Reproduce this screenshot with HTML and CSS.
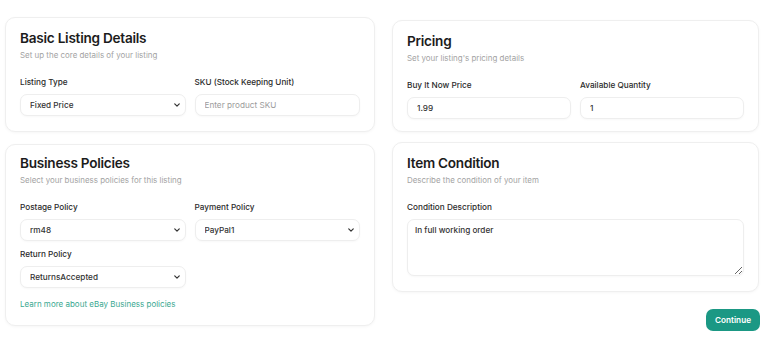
FILE: index.html
```html
<!DOCTYPE html>
<html lang="en">
<head>
<meta charset="utf-8">
<title>Listing</title>
<link rel="stylesheet" href="styles.css">
</head>
<body>
<div class="page">
  <div class="col">
    <section class="card">
      <h2 class="card-title">Basic Listing Details</h2>
      <p class="card-sub">Set up the core details of your listing</p>
      <div class="fields">
        <div class="field">
          <label class="label">Listing Type</label>
          <div class="select-wrap">
            <select class="control"><option>Fixed Price</option></select>
            <svg class="chev" viewBox="0 0 8 5" width="6" height="4"><polyline points="1,1 4,4 7,1" fill="none" stroke="#333" stroke-width="1.6" stroke-linecap="round" stroke-linejoin="round"/></svg>
          </div>
        </div>
        <div class="field">
          <label class="label">SKU (Stock Keeping Unit)</label>
          <input class="control" type="text" placeholder="Enter product SKU">
        </div>
      </div>
    </section>

    <section class="card card-policies">
      <h2 class="card-title">Business Policies</h2>
      <p class="card-sub">Select your business policies for this listing</p>
      <div class="fields">
        <div class="field">
          <label class="label">Postage Policy</label>
          <div class="select-wrap">
            <select class="control"><option>rm48</option></select>
            <svg class="chev" viewBox="0 0 8 5" width="6" height="4"><polyline points="1,1 4,4 7,1" fill="none" stroke="#333" stroke-width="1.6" stroke-linecap="round" stroke-linejoin="round"/></svg>
          </div>
        </div>
        <div class="field">
          <label class="label">Payment Policy</label>
          <div class="select-wrap">
            <select class="control"><option>PayPal1</option></select>
            <svg class="chev" viewBox="0 0 8 5" width="6" height="4"><polyline points="1,1 4,4 7,1" fill="none" stroke="#333" stroke-width="1.6" stroke-linecap="round" stroke-linejoin="round"/></svg>
          </div>
        </div>
      </div>
      <div class="fields fields-next">
        <div class="field">
          <label class="label">Return Policy</label>
          <div class="select-wrap">
            <select class="control"><option>ReturnsAccepted</option></select>
            <svg class="chev" viewBox="0 0 8 5" width="6" height="4"><polyline points="1,1 4,4 7,1" fill="none" stroke="#333" stroke-width="1.6" stroke-linecap="round" stroke-linejoin="round"/></svg>
          </div>
        </div>
        <div class="field"></div>
      </div>
      <a class="link" href="#">Learn more about eBay Business policies</a>
    </section>
  </div>

  <div class="col">
    <section class="card card-pricing">
      <h2 class="card-title">Pricing</h2>
      <p class="card-sub">Set your listing's pricing details</p>
      <div class="fields">
        <div class="field">
          <label class="label">Buy It Now Price</label>
          <input class="control" type="text" value="1.99">
        </div>
        <div class="field">
          <label class="label">Available Quantity</label>
          <input class="control" type="text" value="1">
        </div>
      </div>
    </section>

    <section class="card">
      <h2 class="card-title">Item Condition</h2>
      <p class="card-sub">Describe the condition of your item</p>
      <div class="fields fields-single">
        <div class="field">
          <label class="label">Condition Description</label>
          <textarea class="control area">In full working order</textarea>
        </div>
      </div>
    </section>

    <button class="btn" type="button">Continue</button>
  </div>
</div>
</body>
</html>
```

FILE: styles.css
```css
* { box-sizing: border-box; }

html, body {
  margin: 0;
  background: #ffffff;
  font-family: Inter, "Noto Sans", "Liberation Sans", sans-serif;
  color: #1c1c1c;
}

.page {
  display: flex;
  gap: 17px;
  padding: 17px 0 0 5px;
  align-items: flex-start;
}

.col {
  display: flex;
  flex-direction: column;
  gap: 10px;
}
.col:first-child { width: 370px; }
.col:last-child { width: 367px; }

.card {
  background: #fff;
  border: 1px solid #efefef;
  border-radius: 10px;
  box-shadow: 0 1px 3px rgba(0, 0, 0, 0.04);
  padding: 12px 14px 15px;
}

.card-pricing {
  margin-top: 3px;
  padding-bottom: 12px;
}

.card-policies {
  margin-top: 2px;
  padding-top: 10px;
}

.card-title {
  margin: 0;
  font-size: 13.6px;
  line-height: 17px;
  font-weight: 600;
  color: #1c1c1c;
  letter-spacing: -0.25px;
}

.card-sub {
  margin: 3px 0 0;
  font-size: 7.95px;
  line-height: 11px;
  color: #a3a3a3;
}

.fields {
  display: grid;
  grid-template-columns: 1fr 1fr;
  column-gap: 9px;
  margin-top: 16px;
}
.fields-next { margin-top: 8px; }
.fields-single { grid-template-columns: 1fr; }

.field {
  display: flex;
  flex-direction: column;
  gap: 6px;
}

.label {
  font-size: 8.2px;
  line-height: 11px;
  font-weight: 500;
  color: #2b2b2b;
}

.control {
  display: block;
  width: 100%;
  height: 22px;
  margin: 0;
  padding: 0 9px;
  border: 1px solid #eeeeee;
  border-radius: 7px;
  background: #fff;
  box-shadow: 0 1px 2px rgba(0, 0, 0, 0.03);
  font-family: inherit;
  font-size: 8.2px;
  font-weight: 500;
  color: #333;
  outline: none;
}
.control::placeholder {
  color: #9c9c9c;
  font-weight: 400;
}

select.control {
  appearance: none;
  -webkit-appearance: none;
}

.select-wrap { position: relative; }
.chev {
  position: absolute;
  right: 6px;
  top: 9px;
  pointer-events: none;
}

.area {
  height: 57px;
  padding: 5px 7px;
  line-height: 11px;
  resize: vertical;
}

.link {
  display: block;
  margin-top: 11px;
  font-size: 8px;
  line-height: 11px;
  color: #3aa891;
  text-decoration: none;
}

.btn {
  align-self: flex-end;
  margin-top: 7px;
  margin-right: -1px;
  height: 22px;
  padding: 0 9px;
  border: none;
  border-radius: 7px;
  background: #1b9884;
  color: #fff;
  font-family: inherit;
  font-size: 8.2px;
  font-weight: 600;
}
```
